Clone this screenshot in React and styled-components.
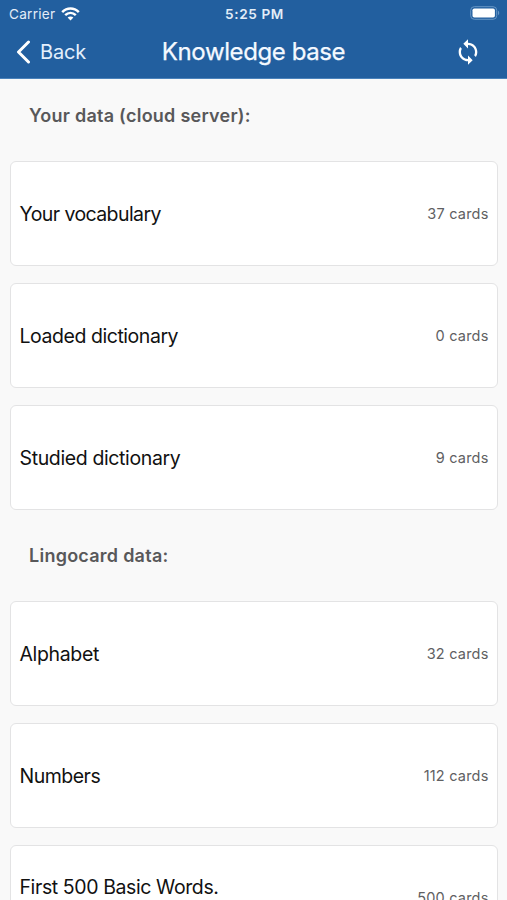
import React from 'react';
import styled, { createGlobalStyle } from 'styled-components';

const GlobalStyle = createGlobalStyle`
  * { box-sizing: border-box; }
  html, body { margin: 0; padding: 0; background: #f9f9f9; }
  body { font-family: Inter, "Liberation Sans", sans-serif; overflow: hidden; }
`;

const Screen = styled.div`
  width: 507px;
  height: 900px;
  overflow: hidden;
  background: #f9f9f9;
`;

const Header = styled.header`
  height: 79px;
  background: #225f9f;
  color: #fff;
  border-bottom: 1px solid #4a82bb;
`;

const StatusBar = styled.div`
  height: 27px;
  padding: 0 7px 0 9px;
  display: grid;
  grid-template-columns: 1fr auto 1fr;
  align-items: center;
  color: #e3edf8;
`;

const Carrier = styled.div`
  display: flex;
  align-items: center;
  gap: 6px;
  font-size: 13.6px;
  letter-spacing: 0.25px;
`;

const Time = styled.div`
  font-size: 13.6px;
  font-weight: 600;
  letter-spacing: 0.6px;
`;

const BatteryIcon = styled.svg`
  justify-self: end;
`;

const NavBar = styled.nav`
  height: 49px;
  padding: 0 25px 0 16px;
  display: grid;
  grid-template-columns: 1fr auto 1fr;
  align-items: center;
`;

const BackButton = styled.button`
  display: flex;
  align-items: center;
  gap: 9px;
  padding: 1px 0 0;
  border: 0;
  background: none;
  color: #e3effc;
  font: 400 20px Inter, sans-serif;
  letter-spacing: -0.2px;
`;

const Title = styled.h1`
  margin: 0 0 0 9px;
  font-size: 24px;
  font-weight: 400;
  letter-spacing: -0.4px;
  color: #f4f9ff;
  -webkit-text-stroke: 0.25px #f4f9ff;
`;

const RefreshButton = styled.button`
  justify-self: end;
  display: flex;
  padding: 1px 0 0;
  border: 0;
  background: none;
  color: #fff;
`;

const SectionTitle = styled.h2`
  margin: 0;
  height: ${(p) => p.$height}px;
  padding: ${(p) => p.$top}px 29px 0;
  font-size: 18px;
  line-height: 24px;
  font-weight: 600;
  letter-spacing: 0.25px;
  color: #58585a;
`;

const CardList = styled.div`
  display: flex;
  flex-direction: column;
  gap: 17px;
  padding: 0 9px 0 10px;
`;

const Card = styled.div`
  height: 105.1px;
  flex: none;
  display: flex;
  align-items: center;
  justify-content: space-between;
  padding: 0 8.5px 0 8.5px;
  background: #fff;
  border: 1px solid #e3e3e4;
  border-radius: 6px;
`;

const CardName = styled.span`
  font-size: 19.5px;
  line-height: 24px;
  letter-spacing: ${(p) => p.$tracking}px;
  color: #111;
  padding-bottom: ${(p) => (p.$twoLine ? 23 : 0)}px;
`;

const CardCount = styled.span`
  font-size: 14.5px;
  line-height: 20px;
  font-weight: 400;
  letter-spacing: 0.2px;
  color: #606062;
`;

const sections = [
  {
    title: 'Your data (cloud server):',
    height: 82,
    top: 25,
    cards: [
      { name: 'Your vocabulary', count: 37, tracking: -0.58 },
      { name: 'Loaded dictionary', count: 0, tracking: -0.45 },
      { name: 'Studied dictionary', count: 9, tracking: -0.37 },
    ],
  },
  {
    title: 'Lingocard data:',
    height: 91,
    top: 34,
    cards: [
      { name: 'Alphabet', count: 32, tracking: -0.36 },
      { name: 'Numbers', count: 112, tracking: -0.5 },
      { name: 'First 500 Basic Words.', count: 500, tracking: -0.4, twoLine: true },
    ],
  },
];

export default function App() {
  return (
    <Screen>
      <GlobalStyle />
      <Header>
        <StatusBar>
          <Carrier>
            Carrier
            <svg width="19" height="14" viewBox="0 0 19 14" fill="none" stroke="#fff" strokeWidth="2.5">
              <path d="M1.2 5.1C6 .2 13 .2 17.8 5.1" />
              <path d="M4.2 8.2C7.3 5.2 11.7 5.2 14.8 8.2" />
              <path d="M6.6 10.5C8.2 9 10.8 9 12.4 10.5L9.5 13.5Z" fill="#fff" stroke="none" />
            </svg>
          </Carrier>
          <Time>5:25 PM</Time>
          <BatteryIcon width="30" height="15" viewBox="0 0 30 15" fill="none">
            <rect x="0.7" y="0.7" width="26" height="12.6" rx="3.6" stroke="#6796c5" />
            <rect x="2.5" y="2.5" width="22.4" height="9" rx="1.8" fill="#fff" />
            <path d="M28 4.8C29.6 5.4 29.6 8.6 28 9.2Z" fill="#6796c5" />
          </BatteryIcon>
        </StatusBar>
        <NavBar>
          <BackButton>
            <svg width="15" height="24" viewBox="0 0 15 24" fill="none" stroke="#fff" strokeWidth="3" strokeLinecap="round" strokeLinejoin="round">
              <path d="M12.5 2L2.5 12L12.5 22" />
            </svg>
            Back
          </BackButton>
          <Title>Knowledge base</Title>
          <RefreshButton aria-label="Refresh">
            <svg width="28" height="28" viewBox="0 0 24 24" fill="currentColor">
              <path d="M12 4V1L8 5l4 4V6c3.31 0 6 2.69 6 6 0 1.01-.25 1.97-.7 2.8l1.46 1.46C19.54 15.03 20 13.57 20 12c0-4.42-3.58-8-8-8zm0 14c-3.31 0-6-2.69-6-6 0-1.01.25-1.97.7-2.8L5.24 7.74C4.46 8.97 4 10.43 4 12c0 4.42 3.58 8 8 8v3l4-4-4-4v3z" />
            </svg>
          </RefreshButton>
        </NavBar>
      </Header>
      {sections.map((section) => (
        <section key={section.title}>
          <SectionTitle $height={section.height} $top={section.top}>{section.title}</SectionTitle>
          <CardList>
            {section.cards.map((card) => (
              <Card key={card.name}>
                <CardName $tracking={card.tracking} $twoLine={card.twoLine}>{card.name}</CardName>
                <CardCount>{card.count} cards</CardCount>
              </Card>
            ))}
          </CardList>
        </section>
      ))}
    </Screen>
  );
}
